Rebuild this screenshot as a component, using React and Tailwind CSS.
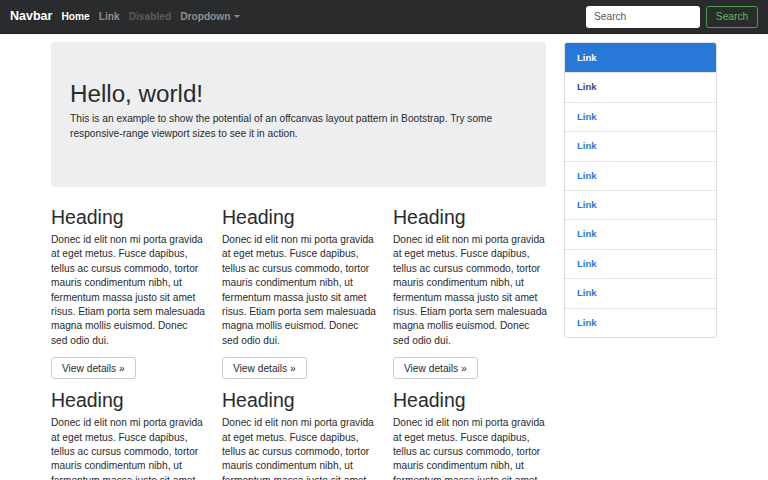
const body =
  "Donec id elit non mi porta gravida at eget metus. Fusce dapibus, tellus ac cursus commodo, tortor mauris condimentum nibh, ut fermentum massa justo sit amet risus. Etiam porta sem malesuada magna mollis euismod. Donec sed odio dui.";

function Column() {
  return (
    <div className="w-[171px] pr-[16px]">
      <h2 className="text-[19.5px] leading-[22px] font-medium text-[#292b2c] mb-[5px]">Heading</h2>
      <p className="text-[10.2px] leading-[14.4px] text-[#292b2c]">{body}</p>
      <button className="mt-[9px] mb-[10px] h-[22px] px-[10px] border border-[#cccccc] rounded-[3px] bg-white text-[10.2px] text-[#292b2c]">
        View details »
      </button>
    </div>
  );
}

export default function App() {
  const links = Array.from({ length: 10 });
  return (
    <div className="h-[480px] overflow-hidden bg-white font-['Liberation_Sans',Arial,sans-serif] text-[#292b2c]">
      {/* Navbar */}
      <nav className="h-[34px] bg-[#292b2c] border-b border-[#1c1d1e] flex items-center px-[10px]">
        <span className="text-white text-[12.5px] font-bold mr-[9px]">Navbar</span>
        <div className="flex items-center gap-[9px] text-[10.2px] font-bold">
          <span className="text-white">Home</span>
          <span className="text-[#8e8f90]">Link</span>
          <span className="text-[#5b5c5d]">Disabled</span>
          <span className="text-[#8e8f90] flex items-center gap-[3px]">
            Dropdown
            <span className="inline-block w-0 h-0 border-l-[3px] border-r-[3px] border-t-[3px] border-l-transparent border-r-transparent border-t-[#8e8f90] mt-[1px]" />
          </span>
        </div>
        <div className="ml-auto flex items-center gap-[6px]">
          <input
            placeholder="Search"
            className="w-[114px] h-[22px] rounded-[3px] bg-white px-[8px] text-[10.2px] text-[#292b2c] placeholder:text-[#55595c] outline-none"
          />
          <button className="w-[52px] h-[22px] rounded-[3px] border border-[#4e9a4e] text-[#5cb85c] text-[10.2px] bg-transparent">
            Search
          </button>
        </div>
      </nav>

      <div className="flex pl-[51px] pt-[8px] gap-[18px]">
        {/* Main */}
        <div className="w-[495px]">
          <div className="h-[145px] bg-[#eceeef] rounded-[4px] px-[19px] pt-[38px] mb-[19px]">
            <h1 className="text-[24.2px] leading-[28px] font-medium mb-[3px]">Hello, world!</h1>
            <p className="text-[10.2px] leading-[15px]">
              This is an example to show the potential of an offcanvas layout pattern in Bootstrap. Try some
              responsive-range viewport sizes to see it in action.
            </p>
          </div>
          <div className="flex flex-wrap w-[513px]">
            {Array.from({ length: 6 }).map((_, i) => (
              <Column key={i} />
            ))}
          </div>
        </div>

        {/* Sidebar */}
        <div className="w-[153px]">
          <div className="flex flex-col rounded-[3px] border border-[#dddddd] overflow-hidden">
            {links.map((_, i) => (
              <div
                key={i}
                className={
                  i === 0
                    ? "h-[29.4px] flex items-center px-[12px] bg-[#2878d8] text-white text-[9.5px] font-bold"
                    : i === 1
                    ? "h-[29.4px] flex items-center px-[12px] border-t border-[#e4e4e4] text-[#2c4f7c] text-[9.5px] font-bold"
                    : "h-[29.4px] flex items-center px-[12px] border-t border-[#e4e4e4] text-[#2a77d4] text-[9.5px] font-bold"
                }
              >
                Link
              </div>
            ))}
          </div>
        </div>
      </div>
    </div>
  );
}
